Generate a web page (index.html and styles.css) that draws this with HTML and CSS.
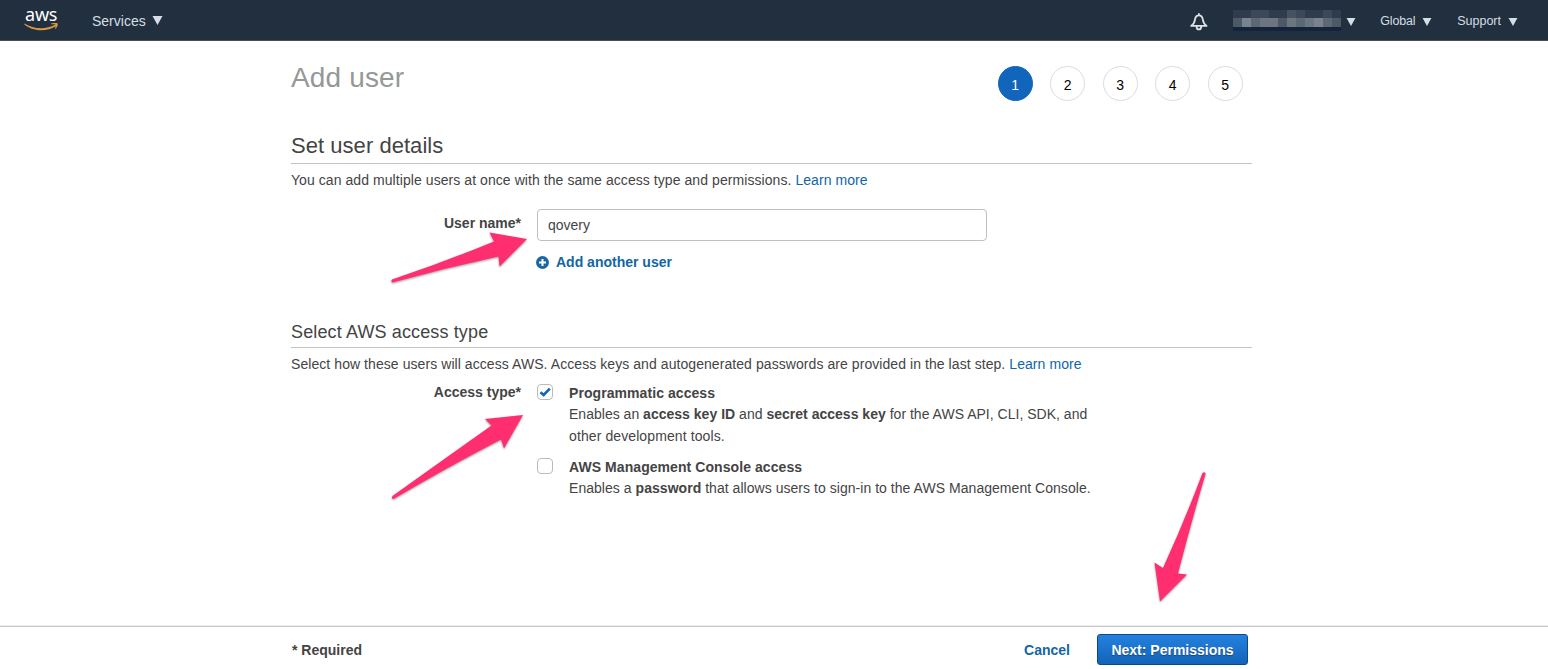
FILE: index.html
```html
<!DOCTYPE html>
<html lang="en">
<head>
<meta charset="utf-8">
<title>Add user</title>
<link rel="stylesheet" href="styles.css">
</head>
<body>
<div class="page">
  <header class="topbar">
    <a class="logo" aria-label="aws">
      <span class="logo-text">aws</span>
      <svg class="logo-smile" viewBox="0 0 35 9" width="35" height="9"><path d="M.6.400C9 6 21 7.200 31.600 1.500L32.600 3C22 9.300 8 8.300.2 1.200z" fill="#dc9a3e"/><path d="M27 .6C29.500-.3 33-.3 33.600.4c.6.900-.200 3.900-2.200 5.500l-.5-.300c.6-1.400 1.200-3.100.9-3.700-.4-.5-2.800-.6-4.700-.6z" fill="#dc9a3e"/></svg>
    </a>
    <a class="services">Services<svg class="caret-lg" viewBox="0 0 10 9"><path d="M0 0h10L5 9z"/></svg></a>
    <nav class="nav-right">
      <svg class="bell" viewBox="0 0 18 18" width="18" height="18" fill="none" stroke="#dbe3e8" stroke-width="1.800" stroke-linejoin="round" stroke-linecap="round"><path d="M8.900 1v1.200M1.200 12.900c2.200-1.500 3.300-3 3.700-6C5.300 4 6.400 2.400 8.900 2.400s3.600 1.600 4 4.500c.4 3 1.500 4.500 3.700 6z"/><path d="M6.600 13.400c0 4 4.600 4 4.600 0"/></svg>
      <span class="account">
        <svg class="mosaic" viewBox="0 0 108 21" width="108" height="21" shape-rendering="crispEdges">
          <path fill="#2e3c4d" d="M0 0h108v8H0z"/><path fill="#3a4858" d="M18 0h18v8H18zM63 0h9v8h-9zM90 0h9v8h-9z"/><path fill="#465260" d="M54 0h9v8h-9z"/>
          <path fill="#5c6875" d="M0 8h108v9H0z"/><path fill="#79838d" d="M9 8h9v9H9zM81 8h9v9h-9z"/><path fill="#6b7681" d="M27 8h18v9H27zM54 8h9v9h-9zM72 8h9v9h-9z"/><path fill="#4d5967" d="M0 8h9v9H0zM45 8h9v9h-9zM99 8h9v9h-9z"/>
          <path fill="#15243a" d="M0 17h108v4H0z"/>
        </svg>
        <svg class="caret" viewBox="0 0 10 9"><path d="M0 0h10L5 9z"/></svg>
      </span>
      <span class="menu global"><span class="menu-label">Global</span><svg class="caret" viewBox="0 0 10 9"><path d="M0 0h10L5 9z"/></svg></span>
      <span class="menu"><span class="menu-label">Support</span><svg class="caret" viewBox="0 0 10 9"><path d="M0 0h10L5 9z"/></svg></span>
    </nav>
  </header>

  <main class="content">
    <div class="title-row">
      <h1>Add user</h1>
      <ol class="steps"><li class="step active">1</li><li class="step">2</li><li class="step">3</li><li class="step">4</li><li class="step">5</li></ol>
    </div>
    <section>
      <h2>Set user details</h2>
      <p class="intro intro-details">You can add multiple users at once with the same access type and permissions. <a>Learn more</a></p>
      <div class="field">
        <label class="field-label" for="name">User name*</label>
        <div>
          <input id="name" class="text-input" type="text" value="qovery">
          <a class="add-user"><svg width="13" height="13" viewBox="0 0 13 13"><circle cx="6.500" cy="6.500" r="6.500" fill="#1b66a4"/><path d="M6.500 3v7M3 6.500h7" stroke="#fff" stroke-width="2"/></svg><span>Add another user</span></a>
        </div>
      </div>
    </section>
    <section class="access">
      <h3>Select AWS access type</h3>
      <p class="intro intro-access">Select how these users will access AWS. Access keys and autogenerated passwords are provided in the last step. <a>Learn more</a></p>
      <div class="field">
        <span class="field-label">Access type*</span>
        <div class="options">
          <div class="option">
            <span class="box"><svg viewBox="0 0 16 16" width="14" height="14"><path d="M2.800 8.200l3.700 3.200 7-7.200" fill="none" stroke="#1166bb" stroke-width="3"/></svg></span>
            <div class="option-text"><b class="option-title">Programmatic access</b><span>Enables an <b>access key ID</b> and <b>secret access key</b> for the AWS API, CLI, SDK, and</span><span class="wrapped">other development tools.</span></div>
          </div>
          <div class="option">
            <span class="box"></span>
            <div class="option-text"><b class="option-title">AWS Management Console access</b><span class="console">Enables a <b>password</b> that allows users to sign-in to the AWS Management Console.</span></div>
          </div>
        </div>
      </div>
    </section>
  </main>

  <footer class="footer">
    <div class="footer-inner">
      <span class="required">* Required</span>
      <a class="cancel">Cancel</a>
      <button class="next">Next: Permissions</button>
    </div>
  </footer>

  <svg class="arrows" viewBox="0 0 1548 669" width="1548" height="669">
    <path d="M527 239L489.500 232.500 494 241.500Q444 262 392 279.500Q390.500 282 392.500 282.500Q445 268 498.500 256.500L499.500 266.500Z"/>
    <path d="M523 415L485 419 491.500 425.500Q440 462 392.500 496Q391 499 393.500 499Q446 468 501 439.500L504 448.500Z"/>
    <path d="M1160 601.500L1154.500 562.500 1163 568Q1185 520 1202.500 473Q1205.500 471 1205.500 474Q1191 523 1178 573.500L1187 574.500Z"/>
  </svg>
</div>
</body>
</html>
```
FILE: styles.css
```css
* { box-sizing: border-box; }
body { margin: 0; background: #fff; color: #444; font: 14px/22px "Liberation Sans", Arial, sans-serif; }
.page { position: relative; display: flex; flex-direction: column; height: 669px; overflow: hidden; }
a { color: #1166a5; }
h1, h2, h3, p, ol { margin: 0; padding: 0; font-weight: 400; }

.topbar { display: flex; height: 41px; background: #212f3f; border-bottom: 1px solid #46505b; color: #d5dee5; }
.logo { display: flex; flex-direction: column; width: 35px; margin-left: 24px; }
.logo-text { height: 23px; padding-left: 1px; font: 400 18px/28px "Noto Sans", sans-serif; letter-spacing: -.2px; color: #fff; }
.logo-smile { flex: none; }
.services { display: flex; align-items: center; margin-left: 33px; padding-top: 2px; color: #d5dee5; font-size: 14px; }
.caret-lg { width: 11px; height: 9px; margin: -2px 0 0 6px; fill: #d5dee5; }
.nav-right { display: flex; align-items: center; margin-left: auto; margin-right: 30px; font-size: 12.500px; }
.bell { margin: 3px 25px 0 0; }
.account { display: flex; align-items: center; margin-right: 24px; }
.account .caret { margin-left: 5px; }
.menu { display: flex; align-items: center; }
.menu-label { padding-top: 2px; }
.menu .caret { margin-left: 7px; }
.global { margin-right: 25px; }
.global .menu-label { letter-spacing: -.2px; }
.caret { width: 10px; height: 8px; margin-top: 3px; fill: #d5dee5; }

.content { width: 961px; margin-left: 291px; flex: 1; }
.title-row { display: flex; justify-content: space-between; height: 89px; padding: 25px 9.400px 0 0; }
h1 { font-size: 28px; line-height: 23px; letter-spacing: .15px; color: #959898; }
.steps { display: flex; gap: 17.500px; list-style: none; }
.step { width: 35px; height: 35px; border: 1px solid #d9dce8; border-radius: 50%; text-align: center; line-height: 36px; color: #000; }
.step.active { background: #1166bb; border-color: #1166bb; color: #fff; }
h2 { height: 34px; border-bottom: 1px solid #c5c5c5; font-size: 22px; line-height: 31px; letter-spacing: .04px; }
h3 { height: 28px; border-bottom: 1px solid #c5c5c5; font-size: 18px; line-height: 24px; letter-spacing: .13px; }
.intro { padding-top: 5px; white-space: nowrap; letter-spacing: .068px; }
.field { display: flex; }
.field-label { width: 230px; margin-right: 16px; text-align: right; font-weight: 700; }
.intro-details + .field { margin-top: 18px; }
.intro-details + .field .field-label { padding-top: 3px; }
.text-input { display: block; width: 450px; height: 32px; padding: 0 10px; border: 1px solid #c0c0c0; border-radius: 4px; color: #444; font: 14px "Liberation Sans", Arial, sans-serif; outline: 0; }
.add-user { display: flex; align-items: center; gap: 7px; margin: 10px 0 0 -1px; font-weight: 700; }
.access { margin-top: 47px; }
.intro-access + .field { margin-top: 6px; }
.options { display: flex; flex-direction: column; gap: 8px; }
.option { display: flex; gap: 16px; white-space: nowrap; }
.option-text { display: flex; flex-direction: column; }
.option-text > span { display: block; line-height: 21px; letter-spacing: .015px; }
.option-text > .option-title { line-height: 22px; padding-top: 1px; letter-spacing: .07px; }
.option-text > .wrapped { line-height: 22px; letter-spacing: .1px; }
.option-text > .console { letter-spacing: .04px; }
.box { display: block; width: 16px; height: 16px; margin-top: 3px; border: 1px solid #bbb; border-radius: 4px; }
.box svg { display: block; }

.footer { height: 43px; border-top: 1px solid #c8c8c8; box-shadow: 0 -1px 0 #eee; }
.footer-inner { display: flex; align-items: center; width: 957px; height: 45px; margin-left: 291px; font-weight: 700; }
.required { padding-left: 1px; }
.cancel { margin-left: auto; }
.next { width: 151px; height: 31px; margin-left: 27px; padding: 0; border: 1px solid #12487f; border-radius: 3px; background: linear-gradient(#2481df, #1264b8); color: #fff; font: 700 14px "Liberation Sans", Arial, sans-serif; text-shadow: 0 1px 1px #1a4473; }
.arrows { position: absolute; left: 0; top: 0; pointer-events: none; fill: #ff2e70; filter: drop-shadow(0 1px 1px rgba(0, 0, 0, .4)); }
```
